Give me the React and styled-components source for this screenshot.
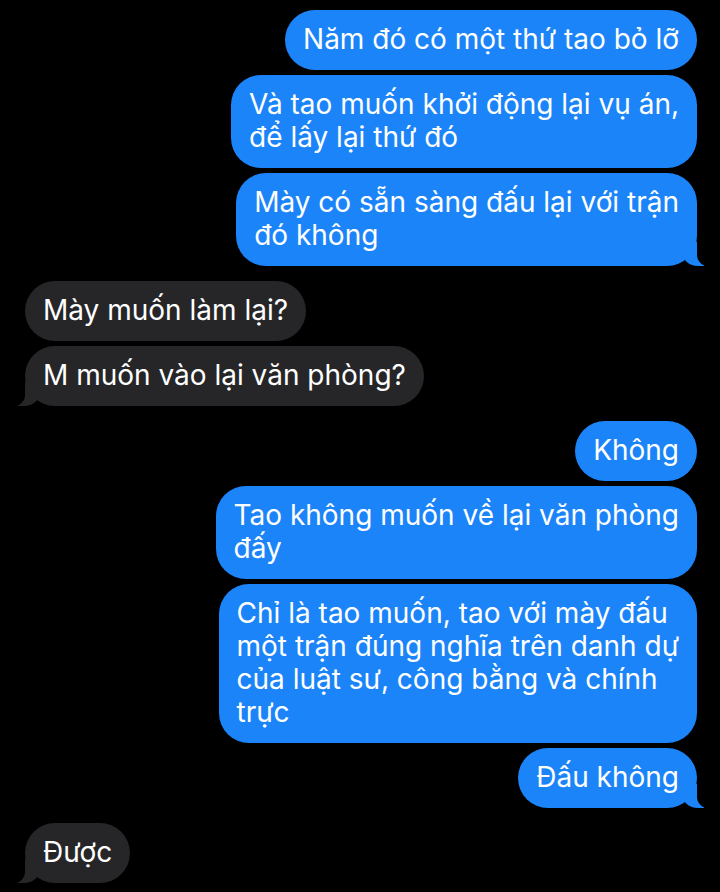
import styled, { createGlobalStyle, css } from "styled-components";

const GlobalStyle = createGlobalStyle`
  html, body {
    margin: 0;
    padding: 0;
    background: #000;
  }
  body {
    font-family: Inter, "Noto Sans", "Liberation Sans", sans-serif;
    -webkit-font-smoothing: antialiased;
  }
`;

const Thread = styled.div`
  width: 720px;
  height: 892px;
  box-sizing: border-box;
  padding: 10px 23px 0 25px;
  display: flex;
  flex-direction: column;
  overflow: hidden;
  background: #000;
`;

const sentStyle = css`
  align-self: flex-end;
  background: #1b84f9;
`;

const recvStyle = css`
  align-self: flex-start;
  background: #262628;
`;

// tail for the last bubble of a group
const sentTail = css`
  &::before {
    content: "";
    position: absolute;
    bottom: 0;
    right: -7px;
    width: 22px;
    height: 24px;
    background: #1b84f9;
    border-bottom-left-radius: 16px 14px;
  }
  &::after {
    content: "";
    position: absolute;
    bottom: 0;
    right: -24px;
    width: 24px;
    height: 26px;
    background: #000;
    border-bottom-left-radius: 11px;
  }
`;

const recvTail = css`
  &::before {
    content: "";
    position: absolute;
    bottom: 0;
    left: -7px;
    width: 22px;
    height: 24px;
    background: #262628;
    border-bottom-right-radius: 16px 14px;
  }
  &::after {
    content: "";
    position: absolute;
    bottom: 0;
    left: -24px;
    width: 24px;
    height: 26px;
    background: #000;
    border-bottom-right-radius: 11px;
  }
`;

const Bubble = styled.div`
  position: relative;
  box-sizing: border-box;
  max-width: 500px;
  padding: 13px 18px 14px 18px;
  border-radius: 30px;
  color: #fff;
  font-size: 28px;
  line-height: 33px;
  letter-spacing: 0;
  white-space: pre-line;
  margin-top: ${(p) => (p.$first ? "15px" : "5px")};
  ${(p) => (p.$sent ? sentStyle : recvStyle)};
  ${(p) => p.$tail && (p.$sent ? sentTail : recvTail)};

  &:first-child {
    margin-top: 0;
  }
`;

const messages = [
  { sent: true, first: true, text: "Năm đó có một thứ tao bỏ lỡ" },
  { sent: true, text: "Và tao muốn khởi động lại vụ án,\nđể lấy lại thứ đó" },
  { sent: true, tail: true, text: "Mày có sẵn sàng đấu lại với trận\nđó không" },
  { sent: false, first: true, text: "Mày muốn làm lại?" },
  { sent: false, tail: true, text: "M muốn vào lại văn phòng?" },
  { sent: true, first: true, text: "Không" },
  { sent: true, text: "Tao không muốn về lại văn phòng\nđấy" },
  {
    sent: true,
    text: "Chỉ là tao muốn, tao với mày đấu\nmột trận đúng nghĩa trên danh dự\ncủa luật sư, công bằng và chính\ntrực",
  },
  { sent: true, tail: true, text: "Đấu không" },
  { sent: false, first: true, tail: true, text: "Được" },
];

function App() {
  return (
    <>
      <GlobalStyle />
      <Thread>
        {messages.map((m, i) => (
          <Bubble key={i} $sent={m.sent} $tail={m.tail} $first={m.first}>
            {m.text}
          </Bubble>
        ))}
      </Thread>
    </>
  );
}

export default App;
